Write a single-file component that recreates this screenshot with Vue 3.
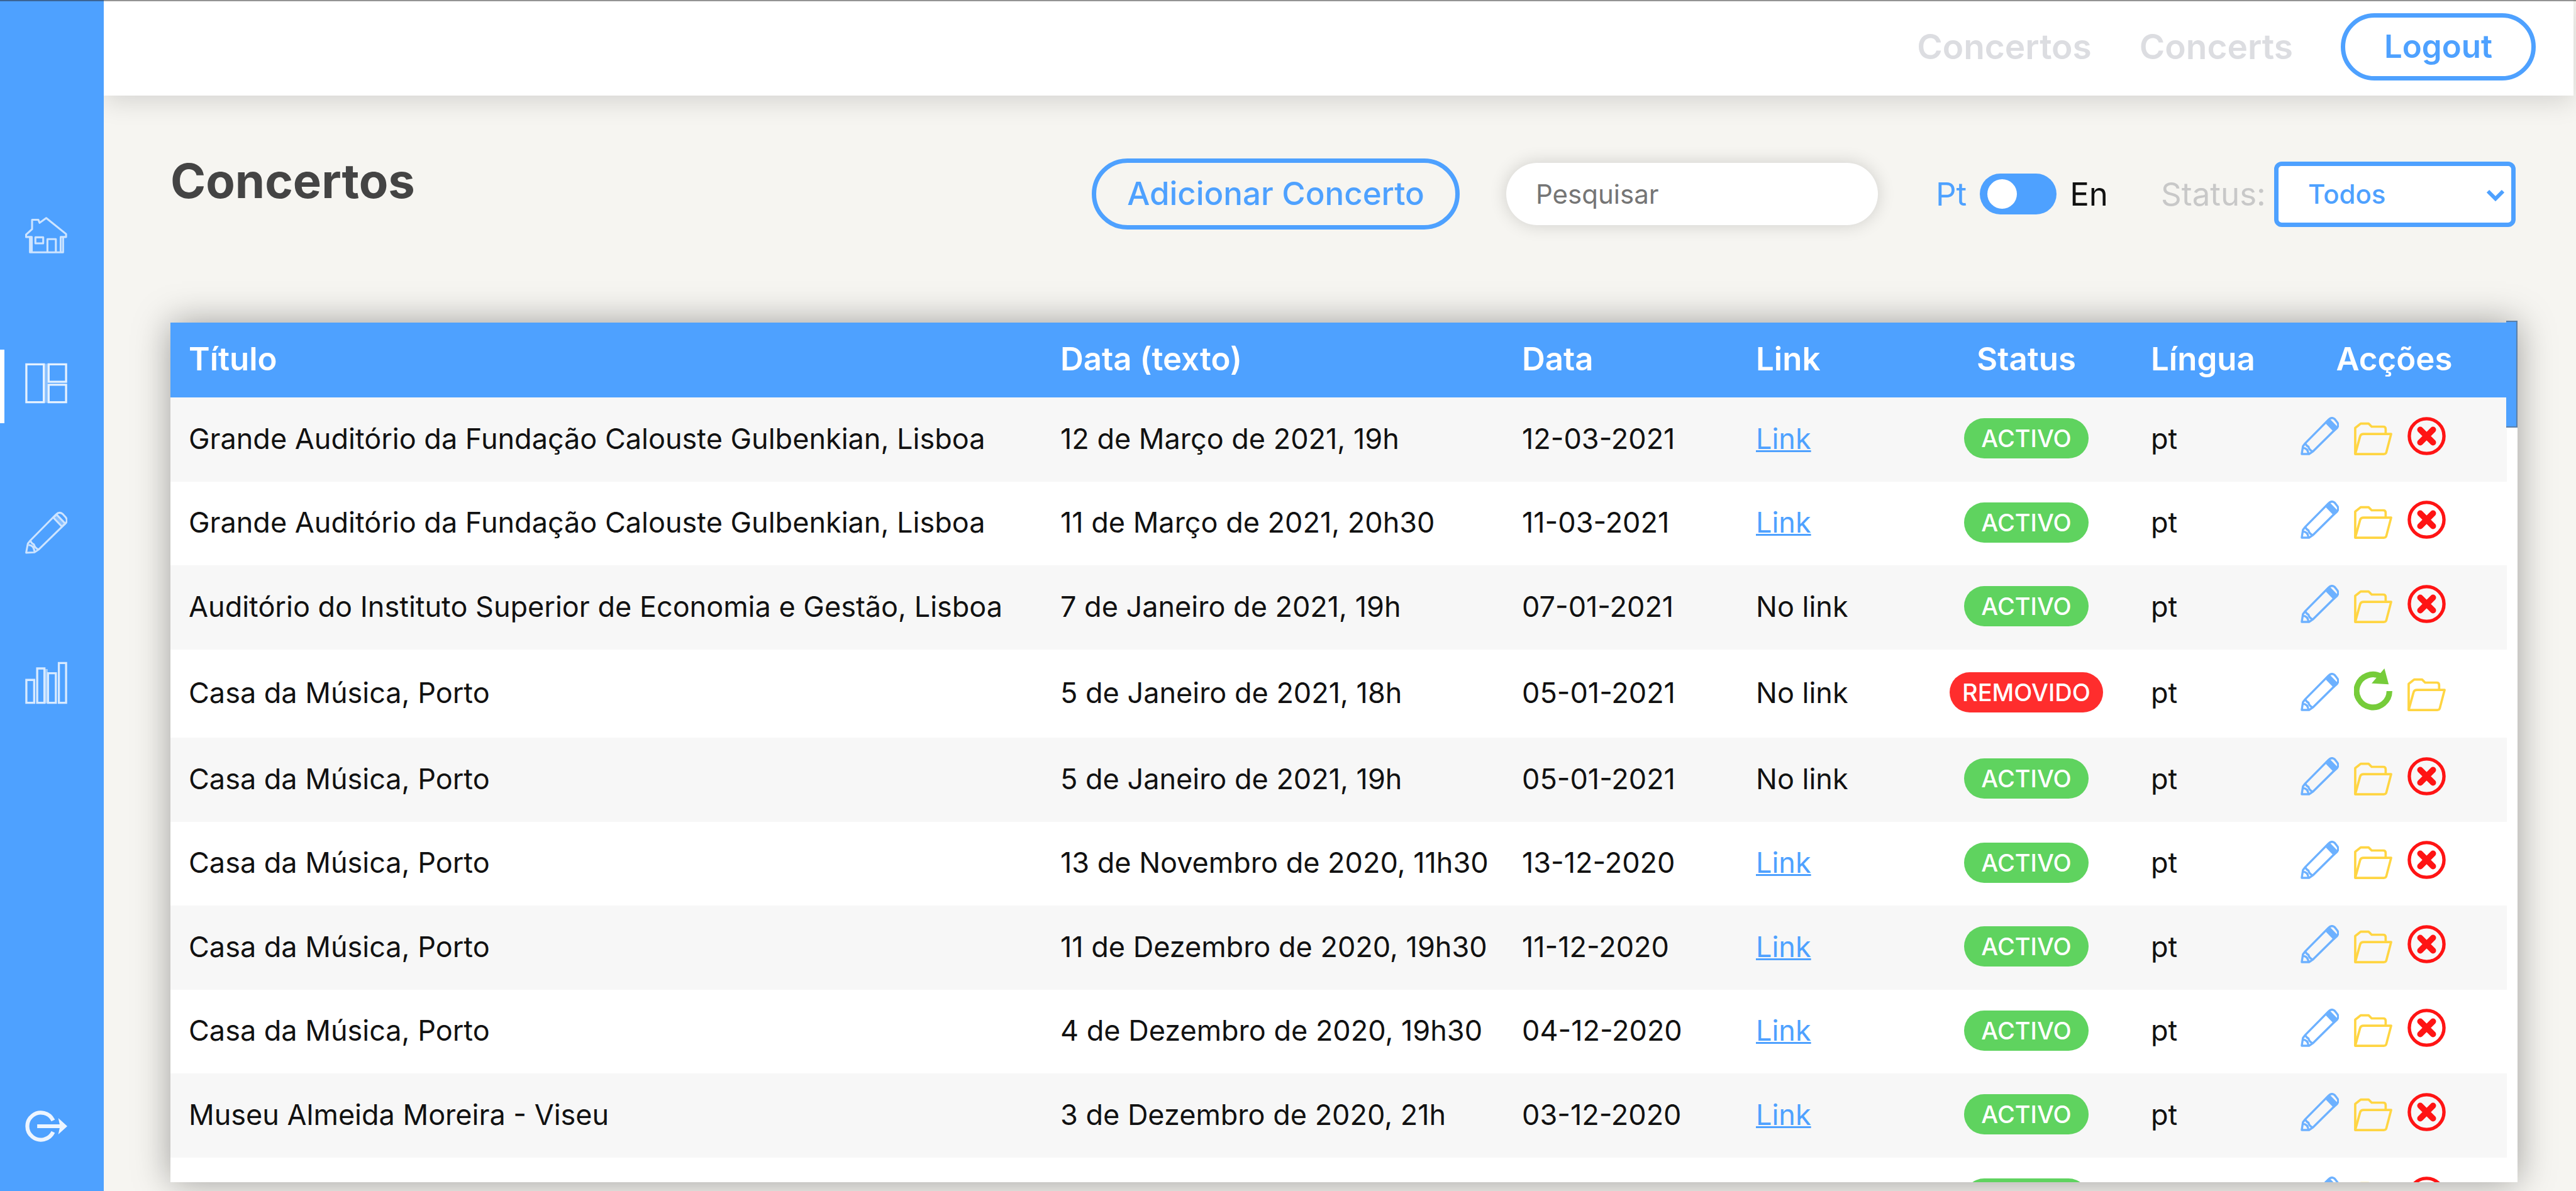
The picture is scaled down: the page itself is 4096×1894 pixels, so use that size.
<script setup>
import { ref } from 'vue'

const search = ref('')
const english = ref(false)
const status = ref('Todos')

const hall = 'Grande Auditório da Fundação Calouste Gulbenkian, Lisboa'
const casa = 'Casa da Música, Porto'

const concerts = [
  { title: hall, text: '12 de Março de 2021, 19h', date: '12-03-2021', link: true, active: true },
  { title: hall, text: '11 de Março de 2021, 20h30', date: '11-03-2021', link: true, active: true },
  { title: 'Auditório do Instituto Superior de Economia e Gestão, Lisboa', text: '7 de Janeiro de 2021, 19h', date: '07-01-2021', link: false, active: true },
  { title: casa, text: '5 de Janeiro de 2021, 18h', date: '05-01-2021', link: false, active: false },
  { title: casa, text: '5 de Janeiro de 2021, 19h', date: '05-01-2021', link: false, active: true },
  { title: casa, text: '13 de Novembro de 2020, 11h30', date: '13-12-2020', link: true, active: true },
  { title: casa, text: '11 de Dezembro de 2020, 19h30', date: '11-12-2020', link: true, active: true },
  { title: casa, text: '4 de Dezembro de 2020, 19h30', date: '04-12-2020', link: true, active: true },
  { title: 'Museu Almeida Moreira - Viseu', text: '3 de Dezembro de 2020, 21h', date: '03-12-2020', link: true, active: true },
  { pending: true, active: true },
]

const actionsFor = (concert) =>
  concert.active ? ['edit', 'folder', 'remove'] : ['edit', 'restore', 'folder']

const statusFor = (concert) => {
  if (concert.pending) return ''
  return concert.active ? 'ACTIVO' : 'REMOVIDO'
}

const labels = { edit: 'Editar', folder: 'Arquivo', remove: 'Remover', restore: 'Restaurar' }
</script>

<template>
  <div class="page">
    <aside class="sidebar">
      <nav class="menu">
        <a href="#" class="item" aria-label="Início">
          <svg width="67" height="58" viewBox="0 0 70 60" fill="none" stroke="#fff" stroke-width="3.200" stroke-linejoin="round" opacity=".72">
            <path d="M35 1.500 68 28v5h-5v25.500H8V33H1.500v-4L11.500 20V4.500H22l2 5z" />
            <path d="M17 33.500h13v10H17zM37 58.500v-22h14v22M62.500 33H59v25M8 33h3v25" />
          </svg>
        </a>
        <a href="#" class="item current" aria-label="Concertos">
          <svg width="67" height="65" viewBox="0 0 70 67" fill="none" stroke="#fff" stroke-width="3.500" opacity=".85">
            <path d="M2 2h29v63H2zM39 2h29v29H39zM39 36h29v29H39z" />
            <path d="M35 1v65" stroke-width="5" opacity=".4" />
          </svg>
        </a>
        <a href="#" class="item" aria-label="Editar">
          <svg width="67" height="68" viewBox="0 0 63 63" fill="none" stroke="#fff" stroke-width="2.800" stroke-linejoin="round" opacity=".72">
            <path d="M1.500 61.500 4 48l4-5L46 4.500q5-5 10-1l4.500 5q4 5-.5 9.500L20 57l-6 4z" />
            <path d="M8 44q2 4 5 5 1 5 7 8M5 50q8 0 9 10" />
            <path d="M42 9 47 4.500 60 18l-5 4.500z" fill="#fff" fill-opacity=".45" />
          </svg>
        </a>
        <a href="#" class="item" aria-label="Estatísticas">
          <svg width="67" height="68" viewBox="0 0 70 70" fill="none" stroke="#fff" stroke-width="3.500" opacity=".78">
            <path d="M2 30h13v38H2zM20 11h12v57H20zM38 19h13v49H38zM56 2h12v66H56z" />
            <path d="M35 12v57" stroke-width="5" opacity=".6" />
          </svg>
        </a>
      </nav>
      <a href="#" class="exit" aria-label="Sair">
        <svg width="67" height="50" viewBox="0 0 70 52" fill="none" stroke="#fff" opacity=".9">
          <path d="M46.500 16.500A22.500 22.500 0 1 0 46.500 35.500" stroke-width="6.500" />
          <path d="M20 26h42" stroke-width="6.500" />
          <path d="M55 12.500 70 26 55 39.500 58 26z" fill="#fff" stroke="none" />
        </svg>
      </a>
    </aside>

    <div class="body">
      <header class="topbar">
        <a href="#" class="top-link">Concertos</a>
        <a href="#" class="top-link">Concerts</a>
        <button type="button" class="pill logout">Logout</button>
      </header>

      <main class="main">
        <div class="tools">
          <h1>Concertos</h1>
          <button type="button" class="pill add">Adicionar Concerto</button>
          <input v-model="search" class="search" type="text" placeholder="Pesquisar" aria-label="Pesquisar" />
          <label class="lang">
            <span class="pt">Pt</span>
            <input v-model="english" type="checkbox" class="switch" aria-label="Pt / En" />
            <span>En</span>
          </label>
          <div class="filter">
            <label for="status">Status:</label>
            <div class="select">
              <select id="status" v-model="status">
                <option>Todos</option>
                <option>Activo</option>
                <option>Removido</option>
              </select>
              <svg class="chevron" width="28" height="19" viewBox="0 0 28 19" fill="none" stroke="#4ea1ff" stroke-width="6">
                <path d="M2 3 14 15 26 3" />
              </svg>
            </div>
          </div>
        </div>

        <section class="card">
          <div class="viewport">
            <table>
              <colgroup>
                <col />
                <col class="c-text" />
                <col class="c-date" />
                <col class="c-link" />
                <col class="c-status" />
                <col class="c-lang" />
                <col class="c-actions" />
              </colgroup>
              <thead>
                <tr>
                  <th>Título</th>
                  <th>Data (texto)</th>
                  <th>Data</th>
                  <th>Link</th>
                  <th class="center">Status</th>
                  <th>Língua</th>
                  <th class="center">Acções</th>
                </tr>
              </thead>
              <tbody>
                <tr v-for="(concert, i) in concerts" :key="i">
                  <td>{{ concert.title }}</td>
                  <td>{{ concert.text }}</td>
                  <td>{{ concert.date }}</td>
                  <td>
                    <a v-if="concert.link" href="#" class="link">Link</a>
                    <template v-else-if="!concert.pending">No link</template>
                  </td>
                  <td class="center">
                    <span class="badge" :class="{ removed: !concert.active }">{{ statusFor(concert) }}</span>
                  </td>
                  <td>{{ concert.pending ? '' : 'pt' }}</td>
                  <td class="actions-cell">
                    <div class="actions">
                      <button v-for="action in actionsFor(concert)" :key="action" type="button" :aria-label="labels[action]">
                        <svg v-if="action === 'edit'" width="61" height="61" viewBox="0 0 63 63" fill="none" stroke="#6db1ff" stroke-width="3.500" stroke-linejoin="round">
                          <path d="M2 61 4 48l4-5L46 4.500q5-5 10-1l4 5q4 5-.5 9.500L20 57l-6 4z" />
                          <path d="M8 44q2 4 5 5 1 5 7 8M4 51q8 0 9 10" />
                          <path d="M42 9 47 4.500 60 18l-5 4.500z" fill="#6db1ff" />
                        </svg>
                        <svg v-else-if="action === 'folder'" width="61" height="61" viewBox="0 0 63 63" fill="none" stroke="#ffd542" stroke-width="3.800" stroke-linejoin="round">
                          <path d="M2 61V18l4-3 5-4h13l5 5h19q4 0 4 4v7" />
                          <path d="M2 61 10 32q1-4 6-4h45L53 58.500q-1 2.500-4 2.500z" />
                        </svg>
                        <svg v-else-if="action === 'remove'" width="61" height="61" viewBox="0 0 63 63" fill="none" stroke="#ff1414">
                          <circle cx="31.500" cy="31.500" r="28.500" stroke-width="5.500" />
                          <path d="M21 21 42 42M42 21 21 42" stroke-width="10" stroke-linecap="round" />
                        </svg>
                        <svg v-else width="61" height="68" viewBox="0 0 63 70" fill="none" stroke="#76cc3a">
                          <path d="M58.200 37A27 27 0 1 1 44 13" stroke-width="9.500" />
                          <path d="M50 0 57 26 29 24.500z" fill="#76cc3a" stroke="none" />
                        </svg>
                      </button>
                    </div>
                  </td>
                </tr>
              </tbody>
            </table>
          </div>
          <div class="thumb"></div>
        </section>
      </main>
    </div>
  </div>
</template>

<style>
body {
  margin: 0;
  background: #f6f5f1;
}
</style>

<style scoped>
* {
  box-sizing: border-box;
}

.page {
  display: flex;
  height: 100vh;
  overflow: hidden;
  position: relative;
  background: #f6f5f1;
  color: #111;
  font-family: Inter, "Noto Sans", sans-serif;
  font-size: 45px;
}

.page::after {
  content: "";
  position: absolute;
  inset: 0 0 auto;
  height: 2px;
  background: rgba(40, 40, 40, 0.5);
  z-index: 3;
}

button,
input,
select {
  font: inherit;
}

.sidebar {
  position: relative;
  z-index: 2;
  flex: 0 0 165px;
  display: flex;
  flex-direction: column;
  justify-content: space-between;
  padding: 317px 0 78px;
  background: #4ea1ff;
}

.menu {
  display: flex;
  flex-direction: column;
  gap: 122px;
}

.item {
  display: flex;
  align-items: flex-end;
  height: 117px;
  padding: 0 0 31px 33px;
  border-left: 7px solid transparent;
}

.item.current {
  border-left-color: #fff;
}

.exit {
  display: flex;
  padding-left: 40px;
}

.body {
  flex: 1;
  min-width: 0;
  display: flex;
  flex-direction: column;
}

.topbar {
  flex: 0 0 152px;
  display: flex;
  align-items: center;
  justify-content: flex-end;
  gap: 76px;
  margin-right: 4px;
  padding: 0 60px 4px 0;
  background: #fff;
  box-shadow: 0 8px 40px rgba(0, 0, 0, 0.14);
}

.top-link {
  color: #dcdde1;
  font-size: 55px;
  font-weight: 600;
  text-decoration: none;
}

.pill {
  border: 7px solid #4ea1ff;
  border-radius: 60px;
  background: transparent;
  color: #4ea1ff;
  font-size: 51px;
  font-weight: 500;
  white-space: nowrap;
  padding: 0 0 2px;
}

.logout {
  width: 310px;
  height: 107px;
  font-weight: 600;
}

.main {
  flex: 1;
  min-height: 0;
  display: flex;
  flex-direction: column;
  gap: 148px;
  padding: 100px 93px 14px 106px;
}

.tools {
  display: flex;
  align-items: center;
  margin-right: 3px;
}

h1 {
  align-self: flex-start;
  margin: 0 auto 0 0;
  color: #444;
  font-size: 76px;
  line-height: 70px;
  font-weight: 700;
}

.add {
  width: 585px;
  height: 113px;
}

.search {
  width: 591px;
  height: 99px;
  margin-left: 74px;
  padding: 0 47px;
  border: 0;
  border-radius: 50px;
  background: #fff;
  box-shadow: 0 0 28px rgba(0, 0, 0, 0.16);
  font-size: 42px;
}

.search::placeholder {
  color: #757575;
}

.lang {
  display: flex;
  align-items: center;
  justify-content: space-between;
  width: 274px;
  margin-left: 92px;
  font-size: 51px;
}

.pt {
  color: #4ea1ff;
}

.switch {
  appearance: none;
  display: flex;
  align-items: center;
  width: 122px;
  height: 65px;
  margin: 0;
  padding: 0 12px;
  border-radius: 33px;
  background: #4ea1ff;
}

.switch::before {
  content: "";
  width: 47px;
  height: 47px;
  border-radius: 50%;
  background: #fff;
}

.switch:checked {
  justify-content: flex-end;
}

.filter {
  display: flex;
  align-items: center;
  justify-content: space-between;
  width: 564px;
  margin-left: 84px;
  color: #c8c8c8;
  font-size: 51px;
}

.select {
  position: relative;
}

select {
  appearance: none;
  display: block;
  width: 384px;
  height: 104px;
  padding: 0 47px;
  border: 7px solid #4ea1ff;
  border-radius: 12px;
  background: #fff;
  color: #4ea1ff;
  font-size: 42px;
  font-weight: 500;
}

.chevron {
  position: absolute;
  top: 44px;
  right: 18px;
  pointer-events: none;
}

.card {
  position: relative;
  flex: 1;
  min-height: 0;
  background: #fff;
  box-shadow: 0 0 54px rgba(0, 0, 0, 0.36);
}

.viewport {
  height: 100%;
  padding-right: 17px;
  overflow: hidden;
}

.thumb {
  position: absolute;
  top: -3px;
  right: 0;
  width: 18px;
  height: 170px;
  border: 2px solid #5b7fa8;
  border-left: 0;
  background: #4ea1ff;
}

table {
  width: 100%;
  table-layout: fixed;
  border-collapse: collapse;
}

.c-text { width: 734px; }
.c-date { width: 372px; }
.c-link { width: 290px; }
.c-status { width: 338px; }
.c-lang { width: 237px; }
.c-actions { width: 358px; }

th,
td {
  padding: 0 0 4px 29px;
  text-align: left;
  white-space: nowrap;
}

th {
  height: 119px;
  background: #4ea1ff;
  color: #fff;
  font-size: 51px;
  font-weight: 600;
}

td {
  height: 133px;
}

tr:nth-child(odd) td {
  height: 134px;
  background: #f7f7f7;
}

.center {
  padding-left: 0;
  text-align: center;
}

.link {
  color: #4ea1ff;
  text-decoration-thickness: 3px;
}

.badge {
  display: inline-block;
  min-width: 198px;
  min-height: 64px;
  padding: 0 16px;
  border-radius: 32px;
  background: #5fd35f;
  color: #fff;
  font-size: 38px;
  line-height: 64px;
  font-weight: 500;
  vertical-align: middle;
}

.badge.removed {
  padding: 0 20px;
  background: #ff2d2d;
}

td.actions-cell {
  padding: 30px 0 42px 30px;
}

.actions {
  display: flex;
  align-items: flex-end;
  gap: 24px;
}

.actions button {
  display: flex;
  padding: 0;
  border: 0;
  background: none;
}
</style>
